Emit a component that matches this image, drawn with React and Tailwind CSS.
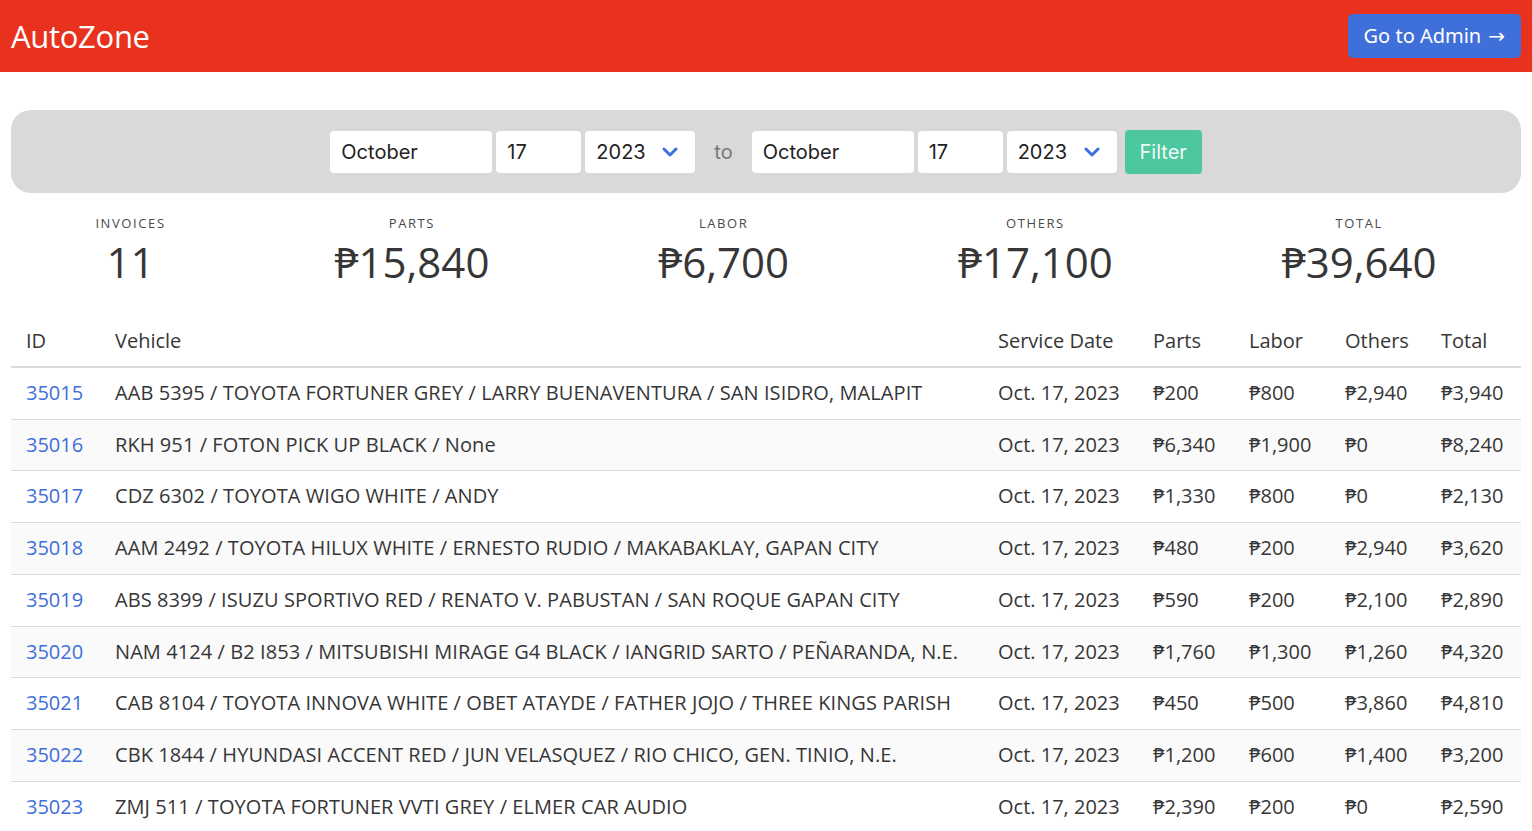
import React from 'react';

const stats = [
  { label: 'INVOICES', value: '11' },
  { label: 'PARTS', value: '₱15,840' },
  { label: 'LABOR', value: '₱6,700' },
  { label: 'OTHERS', value: '₱17,100' },
  { label: 'TOTAL', value: '₱39,640' },
];

const rows = [
  ['35015', 'AAB 5395 / TOYOTA FORTUNER GREY / LARRY BUENAVENTURA / SAN ISIDRO, MALAPIT', '₱200', '₱800', '₱2,940', '₱3,940'],
  ['35016', 'RKH 951 / FOTON PICK UP BLACK / None', '₱6,340', '₱1,900', '₱0', '₱8,240'],
  ['35017', 'CDZ 6302 / TOYOTA WIGO WHITE / ANDY', '₱1,330', '₱800', '₱0', '₱2,130'],
  ['35018', 'AAM 2492 / TOYOTA HILUX WHITE / ERNESTO RUDIO / MAKABAKLAY, GAPAN CITY', '₱480', '₱200', '₱2,940', '₱3,620'],
  ['35019', 'ABS 8399 / ISUZU SPORTIVO RED / RENATO V. PABUSTAN / SAN ROQUE GAPAN CITY', '₱590', '₱200', '₱2,100', '₱2,890'],
  ['35020', 'NAM 4124 / B2 I853 / MITSUBISHI MIRAGE G4 BLACK / IANGRID SARTO / PEÑARANDA, N.E.', '₱1,760', '₱1,300', '₱1,260', '₱4,320'],
  ['35021', 'CAB 8104 / TOYOTA INNOVA WHITE / OBET ATAYDE / FATHER JOJO / THREE KINGS PARISH', '₱450', '₱500', '₱3,860', '₱4,810'],
  ['35022', 'CBK 1844 / HYUNDASI ACCENT RED / JUN VELASQUEZ / RIO CHICO, GEN. TINIO, N.E.', '₱1,200', '₱600', '₱1,400', '₱3,200'],
  ['35023', 'ZMJ 511 / TOYOTA FORTUNER VVTI GREY / ELMER CAR AUDIO', '₱2,390', '₱200', '₱0', '₱2,590'],
];

const Chevron = () => (
  <svg width="16" height="12" viewBox="0 0 16 12" className="text-[#3e6fe0]">
    <polyline points="2,3 8,9 14,3" fill="none" stroke="currentColor" strokeWidth="3" strokeLinecap="round" strokeLinejoin="round" />
  </svg>
);

const DateGroup = () => (
  <div className="flex items-center gap-[4px]">
    <div className="w-[162px] h-[42px] bg-white rounded-[4px] flex items-center pl-[11px] text-[20px] text-[#222]">October</div>
    <div className="w-[85px] h-[42px] bg-white rounded-[4px] flex items-center pl-[11px] text-[20px] text-[#222]">17</div>
    <div className="w-[110px] h-[42px] bg-white rounded-[4px] flex items-center justify-between pl-[11px] pr-[17px] text-[20px] text-[#222]">
      <span>2023</span>
      <Chevron />
    </div>
  </div>
);

const App = () => {
  return (
    <div className="min-h-screen bg-white" style={{ fontFamily: '"Open Sans", "Noto Sans", sans-serif' }}>
      <header className="h-[72px] bg-[#e8321e] flex items-center justify-between pl-[11px] pr-[11px]">
        <h1 className="text-white text-[31px] leading-none tracking-[-0.3px]">AutoZone</h1>
        <button className="h-[44px] px-[16px] bg-[#3f6fd8] rounded-[5px] text-white text-[20px] flex items-center" style={{ fontFamily: '"Noto Sans", sans-serif' }}>
          Go to Admin<span className="ml-[7px]" style={{ fontFamily: '"DejaVu Sans", sans-serif' }}>→</span>
        </button>
      </header>

      <main className="px-[11px]">
        <div className="mt-[38px] h-[83px] bg-[#d9d9d9] rounded-[20px] flex items-center justify-center" style={{ fontFamily: 'Inter, sans-serif' }}>
          <DateGroup />
          <span className="mx-[19px] text-[20px] text-[#777]">to</span>
          <DateGroup />
          <button className="ml-[8px] h-[44px] w-[77px] bg-[#4cc7a0] rounded-[4px] text-[20px] text-[#eefaf6]">Filter</button>
        </div>

        <div className="flex mt-[21px]">
          {stats.map((s) => (
            <div key={s.label} className="grow text-center">
              <p className="text-[13px] leading-[18px] tracking-[1.6px] text-[#4a4a4a] mb-[6px]">{s.label}</p>
              <p className="text-[42px] leading-[47px] text-[#363636]">{s.value}</p>
            </div>
          ))}
        </div>

        <table className="w-full mt-[31px] table-fixed text-[20px] text-[#363636]">
          <colgroup>
            <col className="w-[89px]" />
            <col />
            <col className="w-[155px]" />
            <col className="w-[96px]" />
            <col className="w-[96px]" />
            <col className="w-[96px]" />
            <col className="w-[95px]" />
          </colgroup>
          <thead>
            <tr className="border-b-2 border-[#dbdbdb]">
              {['ID', 'Vehicle', 'Service Date', 'Parts', 'Labor', 'Others', 'Total'].map((h) => (
                <th key={h} className="text-left font-medium px-[15px] py-[10px] leading-[30px] whitespace-nowrap">{h}</th>
              ))}
            </tr>
          </thead>
          <tbody>
            {rows.map((r) => (
              <tr key={r[0]} className="border-b border-[#dbdbdb] even:bg-[#fafafa]">
                <td className="px-[15px] py-[10px] leading-[30.7px]">
                  <a className="text-[#3e6fd8]">{r[0]}</a>
                </td>
                <td className="px-[15px] py-[10px] leading-[30.7px] whitespace-nowrap tracking-[0.08px]">{r[1]}</td>
                <td className="px-[15px] py-[10px] leading-[30.7px] whitespace-nowrap">Oct. 17, 2023</td>
                <td className="px-[15px] py-[10px] leading-[30.7px] whitespace-nowrap">{r[2]}</td>
                <td className="px-[15px] py-[10px] leading-[30.7px] whitespace-nowrap">{r[3]}</td>
                <td className="px-[15px] py-[10px] leading-[30.7px] whitespace-nowrap">{r[4]}</td>
                <td className="px-[15px] py-[10px] leading-[30.7px] whitespace-nowrap">{r[5]}</td>
              </tr>
            ))}
          </tbody>
        </table>
      </main>
    </div>
  );
};

export default App;
